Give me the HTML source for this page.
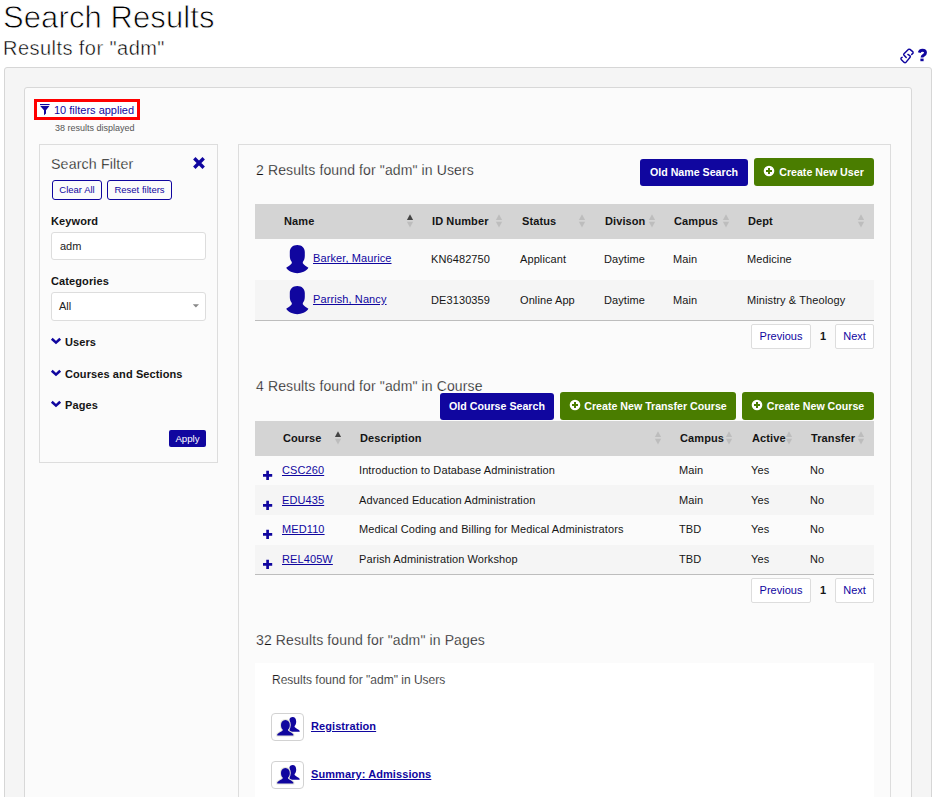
<!DOCTYPE html>
<html><head><meta charset="utf-8">
<style>
*{box-sizing:border-box;margin:0;padding:0}
html,body{width:936px;height:797px;overflow:hidden;background:#fff}
body{font-family:"Liberation Sans",sans-serif;font-size:11px;color:#222;position:relative}
.abs{position:absolute;white-space:nowrap}
svg.abs{z-index:3}
a,a.td{color:#10069f;text-decoration:underline}
.h1{left:3px;top:0px;font-size:31px;color:#000;letter-spacing:0.1px;-webkit-text-stroke:0.8px #fff}
.h2{left:3px;top:37px;font-size:20px;color:#000;letter-spacing:0.45px;-webkit-text-stroke:0.45px #fff}
.outer{left:4px;top:67px;width:928px;height:760px;background:#f5f5f5;border:1px solid #d6d6d6;border-radius:3px}
.inner{left:24px;top:87px;width:888px;height:740px;background:#fbfbfb;border:1px solid #d8d8d8;border-radius:3px}
.redbox{left:34px;top:99px;width:106px;height:21px;border:3px solid #ff0000;background:#fff}
.fa{left:54px;top:103px;font-size:11px;color:#10069f;line-height:14px}
.rd{left:55px;top:122px;font-size:9px;color:#555;line-height:12px}
.fbox{left:39px;top:144px;width:179px;height:319px;border:1px solid #ddd;background:#fbfbfb}
.rbox{left:238px;top:144px;width:653px;height:700px;border:1px solid #ddd;background:#fbfbfb}
.sf{left:51px;top:155px;font-size:14.2px;color:#000;line-height:18px;letter-spacing:0.15px;-webkit-text-stroke:0.3px #fbfbfb}
.sbtn{border:1px solid #10069f;border-radius:3px;color:#10069f;font-size:9.5px;line-height:18px;text-align:center;background:transparent;height:20px}
.lbl{font-weight:bold;font-size:11px;color:#141414;line-height:14px;letter-spacing:0.1px}
.inp{border:1px solid #ddd;border-radius:3px;background:#fff;font-size:11px;color:#222;line-height:26px;padding-left:8px}
.apply{left:169px;top:430px;width:37px;height:17px;background:#10069f;color:#fff;border-radius:2px;font-size:9.7px;line-height:18px;text-align:center}
.sec{font-size:14px;color:#111;line-height:18px;letter-spacing:0.12px;-webkit-text-stroke:0.25px #fbfbfb}
.btn{color:#fff;font-weight:bold;font-size:10.65px;border-radius:3px;text-align:center}
.blue{background:#10069f}
.green{background:#4a7d00}
.thead{background:#d4d4d4}
.th{font-weight:bold;font-size:11px;color:#141414;line-height:14px;letter-spacing:0.1px}
.td{font-size:11px;color:#161616;line-height:14px;letter-spacing:0.1px}
.row2{background:#f5f5f5}
.hr{background:#bdbdbd;height:1px}
.pg{border:1px solid #ddd;background:#fff;border-radius:2px;color:#10069f;font-size:11px;text-align:center;line-height:23px;height:25px}
.white{left:255px;top:663px;width:619px;height:140px;background:#fff}
.ico{width:33px;height:28px;border:1px solid #d2d2d2;border-radius:4px;background:#fff}
.lnk{font-weight:bold;font-size:11px;line-height:14px;letter-spacing:0.08px}
</style></head><body>
<div class="abs h1">Search Results</div>
<div class="abs h2">Results for "adm"</div>
<div class="abs outer"></div>
<div class="abs inner"></div>
<div class="abs redbox"></div>
<div class="abs fa">10 filters applied</div>
<div class="abs rd">38 results displayed</div>
<div class="abs fbox"></div>
<div class="abs rbox"></div>


<svg class="abs" style="left:38px;top:102px" width="14" height="15" viewBox="38 102 14 15"><rect x="40" y="104" width="9.6" height="1.1" fill="#10069f"/><path d="M40.2 106.1H49.4L46 110.3V113.6L44 115.2V110.3Z" fill="#10069f"/></svg>
<svg class="abs" style="left:192px;top:156px" width="14" height="14" viewBox="0 0 14 14"><path d="M2.3 2.3L11.7 11.7M11.7 2.3L2.3 11.7" stroke="#10069f" stroke-width="3.4" stroke-linecap="butt" fill="none"/></svg>
<svg class="abs chev" style="left:50px;top:336px" width="12" height="10" viewBox="0 0 12 10"><path d="M1.8 2.7L6 6.6L10.2 2.7" stroke="#10069f" stroke-width="2.6" fill="none"/></svg>
<svg class="abs chev" style="left:50px;top:368px" width="12" height="10" viewBox="0 0 12 10"><path d="M1.8 2.7L6 6.6L10.2 2.7" stroke="#10069f" stroke-width="2.6" fill="none"/></svg>
<svg class="abs chev" style="left:50px;top:399px" width="12" height="10" viewBox="0 0 12 10"><path d="M1.8 2.7L6 6.6L10.2 2.7" stroke="#10069f" stroke-width="2.6" fill="none"/></svg>
<svg class="abs" style="left:898px;top:46px" width="18" height="20" viewBox="898 46 18 20"><g fill="none" stroke="#10069f" stroke-width="1.45" stroke-linejoin="round" stroke-linecap="round"><path d="M911.7 54.4L913 53.2Q913.3 52.2 912.7 51.6L910 49.4Q909.1 49 908.3 49.4L904 53.7Q903.4 54.3 903.8 54.9L906.2 57.5"/><path d="M907.9 54.4L910.1 55.9Q910.6 56.6 910.1 57.3L905.9 62.4Q905 62.9 904.2 62.4L901.2 59.5Q900.7 58.6 901.2 57.8L902.1 57.3"/></g></svg>
<svg class="abs" style="left:916px;top:46px" width="14" height="18" viewBox="916 46 14 18"><path d="M919.3 52.6Q919.9 50.3 922.5 50.3Q925.5 50.3 925.5 52.8Q925.5 54.2 923.8 55.1Q922 56.1 922 57.5" fill="none" stroke="#10069f" stroke-width="2.9"/><rect x="920.4" y="58.6" width="3.2" height="2.6" fill="#10069f"/></svg>
<div class="abs sf">Search Filter</div>
<div class="abs sbtn" style="left:52px;top:180px;width:50px">Clear All</div>
<div class="abs sbtn" style="left:107px;top:180px;width:65px">Reset filters</div>
<div class="abs lbl" style="left:51px;top:214px">Keyword</div>
<div class="abs inp" style="left:51px;top:232px;width:155px;height:28px">adm</div>
<div class="abs lbl" style="left:51px;top:274px">Categories</div>
<div class="abs inp" style="left:51px;top:292px;width:155px;height:29px;padding-left:7px">All</div>
<svg class="abs" style="left:190px;top:302px" width="10" height="8" viewBox="0 0 10 8"><path d="M2.8 2.2H9L5.9 5.6Z" fill="#888"/></svg>

<div class="abs lbl" style="left:65px;top:335px">Users</div>
<div class="abs lbl" style="left:65px;top:367px">Courses and Sections</div>
<div class="abs lbl" style="left:65px;top:398px">Pages</div>
<div class="abs apply">Apply</div>

<div class="abs sec" style="left:256px;top:161px">2 Results found for "adm" in Users</div>
<div class="abs btn blue" style="left:640px;top:159px;width:108px;height:27px;line-height:27px">Old Name Search</div>
<div class="abs btn green" style="left:754px;top:158px;width:120px;height:28px;line-height:28px;padding-left:15px">Create New User</div>

<div class="abs thead" style="left:255px;top:204px;width:619px;height:35px"></div>
<div class="abs row2" style="left:255px;top:280px;width:619px;height:40px"></div>
<div class="abs hr" style="left:255px;top:320px;width:619px"></div>
<svg class="abs" style="left:406px;top:214px" width="8" height="15" viewBox="0 0 8 15"><path d="M4 0.3L7.1 5.9H0.9Z" fill="#444"/><path d="M4 13.4L7.1 7.8H0.9Z" fill="#bdbdbd"/></svg>
<svg class="abs" style="left:495px;top:214px" width="8" height="15" viewBox="0 0 8 15"><path d="M4 0.3L7.1 5.9H0.9Z" fill="#bdbdbd"/><path d="M4 13.4L7.1 7.8H0.9Z" fill="#bdbdbd"/></svg>
<svg class="abs" style="left:578px;top:214px" width="8" height="15" viewBox="0 0 8 15"><path d="M4 0.3L7.1 5.9H0.9Z" fill="#bdbdbd"/><path d="M4 13.4L7.1 7.8H0.9Z" fill="#bdbdbd"/></svg>
<svg class="abs" style="left:648px;top:214px" width="8" height="15" viewBox="0 0 8 15"><path d="M4 0.3L7.1 5.9H0.9Z" fill="#bdbdbd"/><path d="M4 13.4L7.1 7.8H0.9Z" fill="#bdbdbd"/></svg>
<svg class="abs" style="left:722px;top:214px" width="8" height="15" viewBox="0 0 8 15"><path d="M4 0.3L7.1 5.9H0.9Z" fill="#bdbdbd"/><path d="M4 13.4L7.1 7.8H0.9Z" fill="#bdbdbd"/></svg>
<svg class="abs" style="left:857px;top:214px" width="8" height="15" viewBox="0 0 8 15"><path d="M4 0.3L7.1 5.9H0.9Z" fill="#bdbdbd"/><path d="M4 13.4L7.1 7.8H0.9Z" fill="#bdbdbd"/></svg>
<svg class="abs" style="left:286px;top:245px" width="23" height="29" viewBox="0 0 23 29"><path d="M11.3 0C15.8 0 18.8 2.8 18.8 7V11C18.8 13.5 18 15.5 16.8 17V18.2C18 20 20.5 21.2 22.4 22.8C20.5 26.3 15.3 28.2 11.3 28.2C7.3 28.2 2.1 26.3 0.2 22.8C2.1 21.2 4.6 20 5.8 18.2V17C4.6 15.5 3.8 13.5 3.8 11V7C3.8 2.8 6.8 0 11.3 0Z" fill="#10069f"/></svg>
<svg class="abs" style="left:286px;top:286px" width="23" height="29" viewBox="0 0 23 29"><path d="M11.3 0C15.8 0 18.8 2.8 18.8 7V11C18.8 13.5 18 15.5 16.8 17V18.2C18 20 20.5 21.2 22.4 22.8C20.5 26.3 15.3 28.2 11.3 28.2C7.3 28.2 2.1 26.3 0.2 22.8C2.1 21.2 4.6 20 5.8 18.2V17C4.6 15.5 3.8 13.5 3.8 11V7C3.8 2.8 6.8 0 11.3 0Z" fill="#10069f"/></svg>
<svg class="abs" style="left:334px;top:431px" width="8" height="15" viewBox="0 0 8 15"><path d="M4 0.3L7.1 5.9H0.9Z" fill="#444"/><path d="M4 13.4L7.1 7.8H0.9Z" fill="#bdbdbd"/></svg>
<svg class="abs" style="left:654px;top:431px" width="8" height="15" viewBox="0 0 8 15"><path d="M4 0.3L7.1 5.9H0.9Z" fill="#bdbdbd"/><path d="M4 13.4L7.1 7.8H0.9Z" fill="#bdbdbd"/></svg>
<svg class="abs" style="left:725px;top:431px" width="8" height="15" viewBox="0 0 8 15"><path d="M4 0.3L7.1 5.9H0.9Z" fill="#bdbdbd"/><path d="M4 13.4L7.1 7.8H0.9Z" fill="#bdbdbd"/></svg>
<svg class="abs" style="left:785px;top:431px" width="8" height="15" viewBox="0 0 8 15"><path d="M4 0.3L7.1 5.9H0.9Z" fill="#bdbdbd"/><path d="M4 13.4L7.1 7.8H0.9Z" fill="#bdbdbd"/></svg>
<svg class="abs" style="left:857px;top:431px" width="8" height="15" viewBox="0 0 8 15"><path d="M4 0.3L7.1 5.9H0.9Z" fill="#bdbdbd"/><path d="M4 13.4L7.1 7.8H0.9Z" fill="#bdbdbd"/></svg>
<svg class="abs" style="left:262px;top:470px" width="11" height="11" viewBox="0 0 11 11"><path d="M5.6 0.8V10M1 5.4H10.2" stroke="#10069f" stroke-width="2.7" fill="none"/></svg>
<svg class="abs" style="left:262px;top:500px" width="11" height="11" viewBox="0 0 11 11"><path d="M5.6 0.8V10M1 5.4H10.2" stroke="#10069f" stroke-width="2.7" fill="none"/></svg>
<svg class="abs" style="left:262px;top:529px" width="11" height="11" viewBox="0 0 11 11"><path d="M5.6 0.8V10M1 5.4H10.2" stroke="#10069f" stroke-width="2.7" fill="none"/></svg>
<svg class="abs" style="left:262px;top:559px" width="11" height="11" viewBox="0 0 11 11"><path d="M5.6 0.8V10M1 5.4H10.2" stroke="#10069f" stroke-width="2.7" fill="none"/></svg>
<svg class="abs" style="left:763px;top:165px" width="12" height="12" viewBox="0 0 12 12"><circle cx="6" cy="6" r="5.3" fill="#fff"/><path d="M6 3V9M3 6H9" stroke="#4a7d00" stroke-width="2" fill="none"/></svg>
<svg class="abs" style="left:569px;top:399px" width="12" height="12" viewBox="0 0 12 12"><circle cx="6" cy="6" r="5.3" fill="#fff"/><path d="M6 3V9M3 6H9" stroke="#4a7d00" stroke-width="2" fill="none"/></svg>
<svg class="abs" style="left:751px;top:399px" width="12" height="12" viewBox="0 0 12 12"><circle cx="6" cy="6" r="5.3" fill="#fff"/><path d="M6 3V9M3 6H9" stroke="#4a7d00" stroke-width="2" fill="none"/></svg>
<div class="abs th" style="left:284px;top:214px">Name</div>
<div class="abs th" style="left:432px;top:214px">ID Number</div>
<div class="abs th" style="left:522px;top:214px">Status</div>
<div class="abs th" style="left:605px;top:214px">Divison</div>
<div class="abs th" style="left:674px;top:214px">Campus</div>
<div class="abs th" style="left:748px;top:214px">Dept</div>

<a class="abs td" style="left:313px;top:251px">Barker, Maurice</a>
<div class="abs td" style="left:431px;top:252px">KN6482750</div>
<div class="abs td" style="left:520px;top:252px">Applicant</div>
<div class="abs td" style="left:604px;top:252px">Daytime</div>
<div class="abs td" style="left:673px;top:252px">Main</div>
<div class="abs td" style="left:747px;top:252px">Medicine</div>
<a class="abs td" style="left:313px;top:292px">Parrish, Nancy</a>
<div class="abs td" style="left:431px;top:293px">DE3130359</div>
<div class="abs td" style="left:520px;top:293px">Online App</div>
<div class="abs td" style="left:604px;top:293px">Daytime</div>
<div class="abs td" style="left:673px;top:293px">Main</div>
<div class="abs td" style="left:747px;top:293px">Ministry &amp; Theology</div>

<div class="abs pg" style="left:751px;top:324px;width:60px">Previous</div>
<div class="abs td" style="left:820px;top:329px;font-weight:bold">1</div>
<div class="abs pg" style="left:835px;top:324px;width:39px">Next</div>

<div class="abs sec" style="left:256px;top:377px">4 Results found for "adm" in Course</div>
<div class="abs btn blue" style="left:440px;top:393px;width:114px;height:27px;line-height:27px">Old Course Search</div>
<div class="abs btn green" style="left:560px;top:392px;width:176px;height:28px;line-height:28px;padding-left:15px">Create New Transfer Course</div>
<div class="abs btn green" style="left:742px;top:392px;width:132px;height:28px;line-height:28px;padding-left:15px">Create New Course</div>

<div class="abs thead" style="left:255px;top:421px;width:619px;height:35px"></div>
<div class="abs row2" style="left:255px;top:485px;width:619px;height:30px"></div>
<div class="abs row2" style="left:255px;top:545px;width:619px;height:29px"></div>
<div class="abs hr" style="left:255px;top:574px;width:619px"></div>
<div class="abs th" style="left:283px;top:431px">Course</div>
<div class="abs th" style="left:360px;top:431px">Description</div>
<div class="abs th" style="left:680px;top:431px">Campus</div>
<div class="abs th" style="left:752px;top:431px">Active</div>
<div class="abs th" style="left:811px;top:431px">Transfer</div>

<a class="abs td" style="left:282px;top:463px">CSC260</a>
<div class="abs td" style="left:359px;top:463px">Introduction to Database Administration</div>
<div class="abs td" style="left:679px;top:463px">Main</div>
<div class="abs td" style="left:751px;top:463px">Yes</div>
<div class="abs td" style="left:810px;top:463px">No</div>
<a class="abs td" style="left:282px;top:493px">EDU435</a>
<div class="abs td" style="left:359px;top:493px">Advanced Education Administration</div>
<div class="abs td" style="left:679px;top:493px">Main</div>
<div class="abs td" style="left:751px;top:493px">Yes</div>
<div class="abs td" style="left:810px;top:493px">No</div>
<a class="abs td" style="left:282px;top:522px">MED110</a>
<div class="abs td" style="left:359px;top:522px">Medical Coding and Billing for Medical Administrators</div>
<div class="abs td" style="left:679px;top:522px">TBD</div>
<div class="abs td" style="left:751px;top:522px">Yes</div>
<div class="abs td" style="left:810px;top:522px">No</div>
<a class="abs td" style="left:282px;top:552px">REL405W</a>
<div class="abs td" style="left:359px;top:552px">Parish Administration Workshop</div>
<div class="abs td" style="left:679px;top:552px">TBD</div>
<div class="abs td" style="left:751px;top:552px">Yes</div>
<div class="abs td" style="left:810px;top:552px">No</div>

<div class="abs pg" style="left:751px;top:578px;width:60px">Previous</div>
<div class="abs td" style="left:820px;top:583px;font-weight:bold">1</div>
<div class="abs pg" style="left:835px;top:578px;width:39px">Next</div>

<div class="abs sec" style="left:256px;top:631px">32 Results found for "adm" in Pages</div>
<div class="abs white"></div>
<div class="abs" style="left:272px;top:672px;font-size:12px;color:#222;line-height:16px;-webkit-text-stroke:0.15px #fff">Results found for "adm" in Users</div>
<div class="abs ico" style="left:271px;top:713px"></div>
<svg class="abs" style="left:266px;top:708px" width="44" height="38" viewBox="266 708 44 38"><path d="M292.5 717C295 717 296.2 719 296.2 721.5C296.2 723.5 295.6 725 294.6 726V727C296 728.5 298.5 729.3 299.8 731L299.5 731.8H289.5V719C290 717.8 291.2 717 292.5 717Z" fill="#10069f"/><path d="M285.4 720C288.2 720 289.8 722.2 289.8 725C289.8 727 289.2 728.5 288 729.6V730.4C289.5 731.8 292 732.6 293.3 734.2V735.6H277.3V734.2C278.6 732.6 281.2 731.8 282.7 730.4V729.6C281.6 728.5 281 727 281 725C281 722.2 282.6 720 285.4 720Z" fill="#10069f" stroke="#e2e2da" stroke-width="2" paint-order="stroke"/></svg>
<a class="abs lnk" style="left:311px;top:719px">Registration</a>
<div class="abs ico" style="left:271px;top:761px"></div>
<svg class="abs" style="left:266px;top:756px" width="44" height="38" viewBox="266 708 44 38"><path d="M292.5 717C295 717 296.2 719 296.2 721.5C296.2 723.5 295.6 725 294.6 726V727C296 728.5 298.5 729.3 299.8 731L299.5 731.8H289.5V719C290 717.8 291.2 717 292.5 717Z" fill="#10069f"/><path d="M285.4 720C288.2 720 289.8 722.2 289.8 725C289.8 727 289.2 728.5 288 729.6V730.4C289.5 731.8 292 732.6 293.3 734.2V735.6H277.3V734.2C278.6 732.6 281.2 731.8 282.7 730.4V729.6C281.6 728.5 281 727 281 725C281 722.2 282.6 720 285.4 720Z" fill="#10069f" stroke="#e2e2da" stroke-width="2" paint-order="stroke"/></svg>
<a class="abs lnk" style="left:311px;top:767px">Summary: Admissions</a>
</body></html>
